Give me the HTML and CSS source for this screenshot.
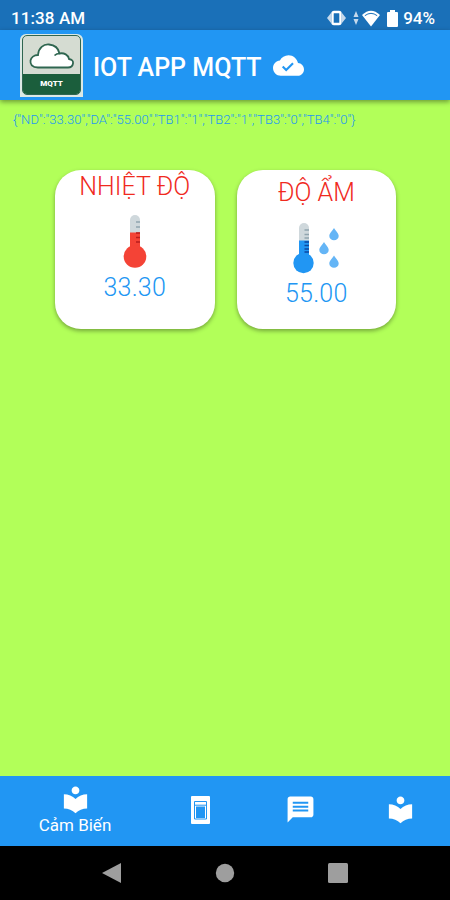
FILE: index.html
```html
<!DOCTYPE html>
<html lang="vi">
<head>
    <meta charset="UTF-8">
    <meta name="viewport" content="width=device-width, initial-scale=1.0">
    <title>IOT APP MQTT</title>
    <link rel="stylesheet" href="styles.css">
</head>
<body>

    <div class="status-bar">
        <span class="time">11:38 AM</span>
        <div class="status-icons">
            <svg class="vibrate" width="19" height="16" viewBox="0 0 19 16">
                <path d="M0 8l4-5v10zM19 8l-4-5v10z" fill="#c5d9ec"/>
                <rect x="5.500" y="2" width="8" height="12" rx="1.500" fill="#1a70b8" stroke="#fff" stroke-width="2.400"/>
            </svg>
            <svg class="traffic" width="6" height="14" viewBox="0 0 6 14">
                <path d="M3 0l2.500 6h-5zM3 14l2.500-6h-5z" fill="#c5d9ec"/>
            </svg>
            <svg class="wifi" width="18" height="17" viewBox="0 0 18 17">
                <path d="M9 16.500L0 5Q9-3.500 18 5z" fill="#fff"/>
                <path d="M2.800 5.700Q9 1 15.200 5.700" fill="none" stroke="#1a70b8" stroke-width="1"/>
            </svg>
            <svg class="battery" width="11" height="17" viewBox="0 0 11 17">
                <path d="M3 0h5v2h2q1 0 1 1v13q0 1-1 1H1q-1 0-1-1V3q0-1 1-1h2z" fill="#fff"/>
            </svg>
            <span class="percent">94%</span>
        </div>
    </div>

    <div class="app-bar">
        <div class="logo">
            <div class="logo-card">
                <svg width="59" height="38" viewBox="0 0 59 38">
                    <path d="M15 31.500C9 31.500 7 28 7.500 24.500C8 21.500 11 19 15 19C15.500 12 20.500 8 26 8.500C31.500 9 35.500 12.500 36.500 17.500C41 16.500 45.500 19 46 23C49 23.500 50.500 25 50 27.500C49.500 30.500 47.500 31.500 45 31.500Z" fill="#fff" stroke="#2f6650" stroke-width="1.800"/>
                    <path d="M36.500 17.500q-3 0-5 2" fill="none" stroke="#2f6650" stroke-width="1.600"/>
                </svg>
                <span class="logo-text">MQTT</span>
            </div>
        </div>
        <h1>IOT APP MQTT</h1>
        <svg class="cloud" width="31" height="31" viewBox="0 0 24 24">
            <path d="M19.350 10.040C18.670 6.590 15.640 4 12 4 9.110 4 6.600 5.640 5.350 8.040 2.340 8.360 0 10.910 0 14c0 3.310 2.690 6 6 6h13c2.760 0 5-2.240 5-5 0-2.640-2.050-4.780-4.650-4.960z" fill="#fff"/>
            <path d="M7.500 12.800l2.700 2.700 5.300-5.300" fill="none" stroke="#2196f3" stroke-width="1.600"/>
        </svg>
    </div>

    <div class="content">
        <p class="message">{"ND":"33.30","DA":"55.00","TB1":"1","TB2":"1","TB3":"0","TB4":"0"}</p>

        <div class="cards">
            <div class="card temperature">
                <h2>NHIỆT ĐỘ</h2>
                <svg width="56" height="56" viewBox="0 0 56 56">
                    <path d="M23 32V7a5 5 0 0 1 10 0v25z" fill="#cfd8dc"/>
                    <path d="M23 19.500h10V36H23z" fill="#f44336"/>
                    <circle cx="28" cy="43.500" r="11.300" fill="#f44336"/>
                    <path d="M29 9h4M29 14h4" stroke="#90a4ae" stroke-width="1.500"/>
                    <path d="M29 20h4M29 24.500h4M29 29h4" stroke="#b71c1c" stroke-width="1.500"/>
                </svg>
                <span class="value">33.30</span>
            </div>

            <div class="card humidity">
                <h2>ĐỘ ẨM</h2>
                <svg width="56" height="56" viewBox="0 0 56 56">
                    <path d="M11 32V9a5 5 0 0 1 10 0v23z" fill="#cfd8dc"/>
                    <path d="M11 21.500h10V36H11z" fill="#2196f3"/>
                    <circle cx="15.500" cy="44" r="10.200" fill="#2196f3"/>
                    <path d="M16.500 11H21M16.500 15.500H21M16.500 19H21" stroke="#90a4ae" stroke-width="1.300"/>
                    <path d="M16.500 23H21M16.500 26.500H21M16.500 30H21M16.500 33H21" stroke="#0d47a1" stroke-width="1.500"/>
                    <g fill="#64b5f6">
                        <path id="drop" d="M46 9c1.500 3 4.700 5 4.700 8a4.700 4.300 0 0 1-9.400 0c0-3 3.200-5 4.700-8z"/>
                        <use href="#drop" x="-10" y="14"/>
                        <use href="#drop" y="27.500"/>
                    </g>
                </svg>
                <span class="value">55.00</span>
            </div>
        </div>
    </div>

    <div class="bottom-nav">
        <div class="nav-item active">
            <svg width="31" height="31" viewBox="0 0 24 24">
                <path d="M12 11.550C9.640 9.350 6.480 8 3 8v11c3.480 0 6.640 1.350 9 3.550 2.360-2.190 5.520-3.550 9-3.550V8c-3.480 0-6.640 1.350-9 3.550zM12 8c1.660 0 3-1.340 3-3s-1.340-3-3-3-3 1.340-3 3 1.340 3 3 3z"/>
            </svg>
            <span>Cảm Biến</span>
        </div>
        <div class="nav-item">
            <svg width="30" height="30" viewBox="0 0 30 30">
                <rect x="6" y="1" width="19" height="28" rx="1"/>
                <path d="M9.500 6.500h12v17.500h-12zM9.500 10.200h12" fill="none" stroke="#2196f3" stroke-width="1"/>
                <path d="M11 11.500h9V23h-9z" fill="#2196f3"/>
            </svg>
        </div>
        <div class="nav-item">
            <svg width="31" height="31" viewBox="0 0 24 24">
                <path d="M20 2H4c-1.100 0-1.990.9-1.990 2L2 22l4-4h14c1.100 0 2-.9 2-2V4c0-1.100-.9-2-2-2zM6 6h12v1.600H6zm0 3h12v1.600H6zm0 3h12v1.600H6z" fill-rule="evenodd"/>
            </svg>
        </div>
        <div class="nav-item">
            <svg width="31" height="31" viewBox="0 0 24 24">
                <path d="M12 11.550C9.640 9.350 6.480 8 3 8v11c3.480 0 6.640 1.350 9 3.550 2.360-2.190 5.520-3.550 9-3.550V8c-3.480 0-6.640 1.350-9 3.550zM12 8c1.660 0 3-1.340 3-3s-1.340-3-3-3-3 1.340-3 3 1.340 3 3 3z"/>
            </svg>
        </div>
    </div>

    <div class="system-nav">
        <svg width="20" height="22" viewBox="0 0 20 22"><path d="M0 11L19 1v20z"/></svg>
        <svg width="20" height="20" viewBox="0 0 20 20"><circle cx="10" cy="10" r="9.200"/></svg>
        <svg width="20" height="20" viewBox="0 0 20 20"><rect width="20" height="20" rx="1.500"/></svg>
    </div>

</body>
</html>
```
FILE: styles.css
```css
* {
    box-sizing: border-box;
}

body {
    font-family: Roboto, "Liberation Sans", sans-serif;
    background-color: #b2ff59;
    color: white;
    margin: 0;
    height: 900px;
    display: flex;
    flex-direction: column;
    overflow: hidden;
}

svg {
    display: block;
    flex-shrink: 0;
}

h1, h2, p {
    margin: 0;
}

.status-bar {
    background-color: #1a70b8;
    height: 30px;
    padding: 6px 15px 0 11px;
    display: flex;
    justify-content: space-between;
    font-size: 17px;
    line-height: 25px;
    font-weight: 500;
}

.time {
    letter-spacing: 0.1px;
}

.status-icons {
    display: flex;
    align-items: center;
}

.traffic {
    margin-left: 7px;
}

.wifi {
    margin-left: 3px;
}

.battery {
    margin-left: 7px;
}

.percent {
    margin-left: 5px;
}

.app-bar {
    background-color: #2196f3;
    height: 70px;
    padding: 4px 20px 0;
    display: flex;
    align-items: flex-start;
    box-shadow: 0 2px 5px rgba(0, 0, 0, 0.4);
    z-index: 1;
}

.logo {
    width: 63px;
    height: 63px;
    padding: 1px 2px 2px;
    border-radius: 6px 6px 0 0;
    background-color: #dce9e4;
}

.logo-card {
    height: 60px;
    background-color: #d5dcd2;
    border: 1px solid #2f6650;
    border-radius: 5px;
    overflow: hidden;
}

.logo-text {
    display: block;
    height: 21px;
    background-color: #1b5e3c;
    font-size: 8px;
    line-height: 20px;
    font-weight: 900;
    text-align: center;
}

h1 {
    margin-left: 10px;
    font-size: 25px;
    line-height: 67px;
    font-weight: 500;
}

.cloud {
    margin: 16px 0 0 11px;
}

.content {
    flex: 1;
}

.message {
    padding: 11px 13px 0;
    color: #2196f3;
    font-size: 13px;
    line-height: 17px;
    font-weight: 300;
    letter-spacing: 0.04px;
    white-space: nowrap;
}

.cards {
    display: flex;
    gap: 22px;
    padding: 42px 54px 0 55px;
}

.card {
    flex: 1;
    height: 159px;
    background-color: white;
    border-radius: 26px;
    box-shadow: 0 2px 4px rgba(0, 0, 0, 0.35);
    display: flex;
    flex-direction: column;
    align-items: center;
}

.card h2 {
    color: #f02a1e;
    font-size: 25px;
    line-height: 33px;
    font-weight: 300;
}

.card svg {
    margin: 10px 0 3px;
}

.humidity {
    padding-top: 6px;
}

.value {
    color: #2196f3;
    font-size: 25px;
    line-height: 32px;
    font-weight: 300;
    letter-spacing: 0.2px;
}

.bottom-nav {
    background-color: #2196f3;
    height: 70px;
    padding-bottom: 3px;
    display: flex;
}

.nav-item {
    width: 100px;
    display: flex;
    flex-direction: column;
    align-items: center;
    justify-content: center;
    fill: white;
    font-size: 17px;
    line-height: 20px;
}

.active {
    width: 150px;
}

.system-nav {
    background-color: black;
    height: 54px;
    display: flex;
    justify-content: center;
    align-items: center;
    gap: 93px;
    fill: #9e9e9e;
}
```
